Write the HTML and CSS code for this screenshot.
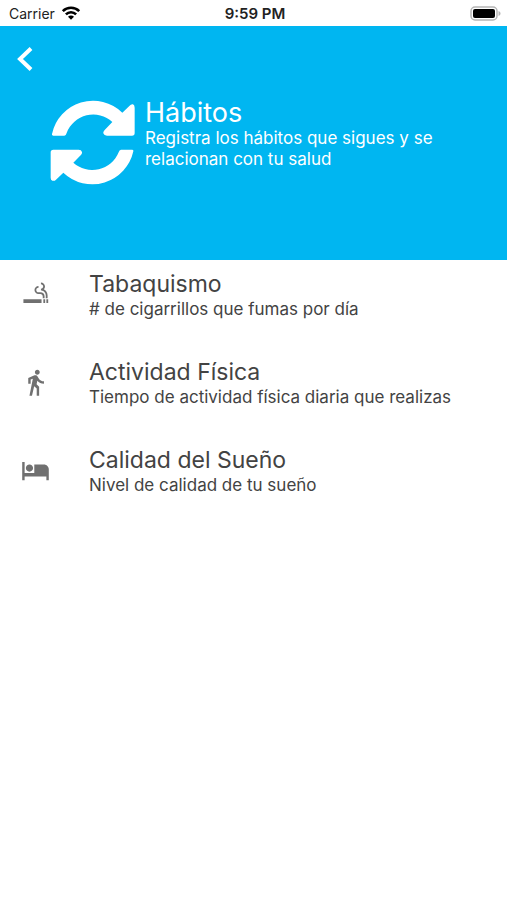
FILE: index.html
```
<!DOCTYPE html>
<html lang="es">
<head>
  <meta charset="UTF-8" />
  <meta name="viewport" content="width=device-width, initial-scale=1.0"/>
  <title>Hábitos</title>
  <link rel="stylesheet" href="styles.css">
</head>
<body>
  <div class="status-bar">
    <div class="carrier">
      <span>Carrier</span>
      <svg width="20" height="14" viewBox="0 0 20 14" fill="none" stroke="#000" stroke-width="2.6">
        <path d="M1.8 5.2a11.6 11.6 0 0 1 16.4 0"/>
        <path d="M4.9 8.3a7.2 7.2 0 0 1 10.2 0"/>
        <path d="M10 13.8l-3-3a4.2 4.2 0 0 1 6 0z" fill="#000" stroke="none"/>
      </svg>
    </div>
    <span class="time">9:59 PM</span>
    <div class="battery">
      <svg width="31" height="15" viewBox="0 0 31 15">
        <rect x="1" y="1" width="26" height="13" rx="4" fill="#fff" stroke="#b5b5b5" stroke-width="1.5"/>
        <rect x="3" y="3" width="22" height="9" rx="2" fill="#000"/>
        <path d="M28.5 5v5c1.400-.5 2-1.400 2-2.500s-.6-2-2-2.500z" fill="#b5b5b5"/>
      </svg>
    </div>
  </div>

  <header class="header">
    <button class="back" aria-label="Volver">
      <svg width="18" height="26" viewBox="0 0 18 26" fill="none" stroke="#fff" stroke-width="4">
        <path d="M15 2.500L4 13l11 10.500"/>
      </svg>
    </button>
    <div class="intro">
      <svg class="intro-icon" viewBox="30 30 258 258" fill="#fff">
        <path d="M40 137Q35 137 36 132A126 126 0 0 1 247 68L268 48Q273 42 279 43Q284 45 284 53V129Q284 137 276 137H201Q192 137 190 130Q189 125 194 120L217 96A85 85 0 0 0 80 129Q78 137 73 137Z"/>
        <path d="M276 179Q281 179 280 184A126 126 0 0 1 70 248L48 269Q43 274 37 272Q32 270 32 263V187Q32 179 40 179H116Q124 179 126 186Q127 191 122 196L100 218A85 85 0 0 0 236 187Q238 179 243 179Z"/>
      </svg>
      <div class="intro-text">
        <h1>Hábitos</h1>
        <p>Registra los hábitos que sigues y se relacionan con tu salud</p>
      </div>
    </div>
  </header>

  <!-- Habits -->
  <ul class="habits">
    <li class="habit">
      <svg class="habit-icon" viewBox="0 0 24 24">
        <path d="M2 16h15v3H2zm16.500 0H20v3h-1.500zM21 16h1.500v3H21zm-2.150-8.270c.62-.61 1-1.450 1-2.380C19.850 3.500 18.350 2 16.500 2v1.500c1.020 0 1.850.83 1.850 1.850S17.520 7.200 16.500 7.200v1.500c2.240 0 4 1.830 4 4.070V15H22v-2.240c0-2.220-1.280-4.140-3.150-5.030zm-2.820 2.470H14.500c-1.020 0-1.850-.98-1.850-2s.83-1.750 1.850-1.750v-1.500c-1.850 0-3.350 1.500-3.350 3.350s1.500 3.350 3.350 3.350h1.530c1.050 0 1.970.74 1.970 2.050V15h1.500v-1.640c0-1.810-1.460-3.160-3.470-3.160z"/>
      </svg>
      <div class="habit-text">
        <h2>Tabaquismo</h2>
        <p># de cigarrillos que fumas por día</p>
      </div>
    </li>
    <li class="habit">
      <svg class="habit-icon" viewBox="0 0 24 24">
        <path d="M13.500 5.500c1.100 0 2-.9 2-2s-.9-2-2-2-2 .9-2 2 .9 2 2 2zM9.800 8.900L7 23h2.100l1.800-8 2.100 2v6h2v-7.500l-2.100-2 .6-3C14.800 12 16.800 13 19 13v-2c-1.900 0-3.500-1-4.300-2.400l-1-1.600c-.4-.6-1-1-1.700-1-.3 0-.5.1-.8.1L6 8.300V13h2V9.600l1.800-.7"/>
      </svg>
      <div class="habit-text">
        <h2>Actividad Física</h2>
        <p>Tiempo de actividad física diaria que realizas</p>
      </div>
    </li>
    <li class="habit">
      <svg class="habit-icon" viewBox="0 0 24 24">
        <path d="M7 13c1.660 0 3-1.340 3-3S8.660 7 7 7s-3 1.340-3 3 1.340 3 3 3zm12-6h-8v7H3V5H1v15h2v-3h18v3h2v-9c0-2.210-1.790-4-4-4z"/>
      </svg>
      <div class="habit-text">
        <h2>Calidad del Sueño</h2>
        <p>Nivel de calidad de tu sueño</p>
      </div>
    </li>
  </ul>
</body>
</html>
```

FILE: styles.css
```
* { box-sizing: border-box; margin: 0; padding: 0; }
body {
  font-family: Inter, 'Liberation Sans', sans-serif;
  background: #fff;
  color: #434343;
}

svg { display: block; }

h1, h2 {
  line-height: 30px;
  font-weight: 400;
}

h1 { font-size: 27px; }
h2 { font-size: 23px; }

p {
  font-size: 17px;
  line-height: 21px;
}

.status-bar {
  display: grid;
  grid-template-columns: 1fr auto 1fr;
  align-items: center;
  height: 26px;
  padding: 0 6px 0 9px;
  font-size: 14px;
  color: #222;
}

.carrier {
  display: flex;
  align-items: center;
  gap: 6px;
}

.time {
  font-size: 15px;
  font-weight: 600;
}

.battery { justify-self: end; }

.header {
  min-height: 234px;
  padding: 20px 16px;
  background: #00b6f1;
  color: #fff;
}

.back {
  display: block;
  background: none;
  border: none;
  cursor: pointer;
}

.intro {
  display: flex;
  gap: 9px;
  padding: 26px 34px 0;
}

.intro-icon {
  flex: none;
  width: 86px;
  height: 86px;
  margin-top: 2px;
}

.intro-text { max-width: 300px; }

.habits {
  display: flex;
  flex-direction: column;
  gap: 37px;
  padding: 9px 21px;
  list-style: none;
}

.habit {
  display: flex;
  align-items: center;
  gap: 39px;
}

.habit-icon {
  flex: none;
  width: 29px;
  height: 29px;
  fill: #707070;
}
```
